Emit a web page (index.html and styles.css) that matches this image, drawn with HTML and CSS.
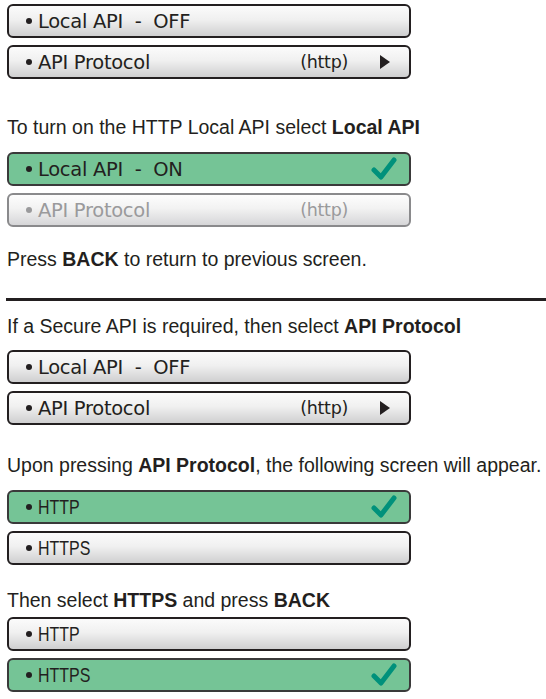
FILE: index.html
```html
<!DOCTYPE html>
<html lang="en">
<head>
    <meta charset="UTF-8">
    <title>Local API Settings</title>
    <link rel="stylesheet" href="styles.css">
</head>
<body>
    <div class="menu first">
        <div class="btn"><span class="dot"></span><span class="label">Local API&nbsp;&nbsp;-&nbsp;&nbsp;OFF</span></div>
        <div class="btn"><span class="dot"></span><span class="label">API Protocol</span><span class="value">(http)</span><span class="arrow"></span></div>
    </div>

    <p class="note n1">To turn on the HTTP Local API select <b>Local API</b></p>

    <div class="menu m2">
        <div class="btn on"><span class="dot"></span><span class="label">Local API&nbsp;&nbsp;-&nbsp;&nbsp;ON</span>
            <svg class="check" viewBox="0 0 28 28"><path d="M5 15 L12 22 L25 5"/></svg>
        </div>
        <div class="btn disabled"><span class="dot"></span><span class="label">API Protocol</span><span class="value">(http)</span><span class="arrow blank"></span></div>
    </div>

    <p class="note n2">Press <b>BACK</b> to return to previous screen.</p>

    <hr class="divider">

    <p class="note n3">If a Secure API is required, then select <b>API Protocol</b></p>

    <div class="menu m3">
        <div class="btn"><span class="dot"></span><span class="label">Local API&nbsp;&nbsp;-&nbsp;&nbsp;OFF</span></div>
        <div class="btn"><span class="dot"></span><span class="label">API Protocol</span><span class="value">(http)</span><span class="arrow"></span></div>
    </div>

    <p class="note n4">Upon pressing <b>API Protocol</b>, the following screen will appear.</p>

    <div class="menu m4">
        <div class="btn on narrow"><span class="dot"></span><span class="label"><span class="squeeze">HTTP</span></span>
            <svg class="check" viewBox="0 0 28 28"><path d="M5 15 L12 22 L25 5"/></svg>
        </div>
        <div class="btn narrow"><span class="dot"></span><span class="label"><span class="squeeze">HTTPS</span></span></div>
    </div>

    <p class="note n5">Then select <b>HTTPS</b> and press <b>BACK</b></p>

    <div class="menu m5">
        <div class="btn narrow"><span class="dot"></span><span class="label"><span class="squeeze">HTTP</span></span></div>
        <div class="btn on narrow"><span class="dot"></span><span class="label"><span class="squeeze">HTTPS</span></span>
            <svg class="check" viewBox="0 0 28 28"><path d="M5 15 L12 22 L25 5"/></svg>
        </div>
    </div>
</body>
</html>
```

FILE: styles.css
```css
body {
    margin: 0;
    padding: 4px 0 0 7px;
    background-color: #ffffff;
    color: #231f20;
    font-family: "Liberation Sans", Arial, sans-serif;
}

.menu {
    width: 404px;
    display: flex;
    flex-direction: column;
    gap: 7px;
}

.m2 { margin-top: 15px; }
.m3 { margin-top: 14px; }
.m4 { margin-top: 15px; }
.m5 { margin-top: 7px; }

.btn {
    height: 34px;
    box-sizing: border-box;
    border: 2px solid #231f20;
    border-radius: 6px;
    background: linear-gradient(#fbfbfb, #f0f0f0 45%, #cfcfd0);
    display: flex;
    align-items: center;
    padding: 0 12px 0 17px;
    font-family: "DejaVu Sans", "Liberation Sans", sans-serif;
    font-size: 19.5px;
    letter-spacing: -0.3px;
    color: #231f20;
}

.btn .dot {
    width: 6px;
    height: 6px;
    border-radius: 50%;
    background-color: #231f20;
    margin-right: 6px;
    flex-shrink: 0;
}

.btn .label {
    flex: 1;
    white-space: nowrap;
}

.btn .value {
    font-size: 17.5px;
    margin-right: 32px;
}

.btn .arrow {
    width: 0;
    height: 0;
    border-top: 7px solid transparent;
    border-bottom: 7px solid transparent;
    border-left: 10px solid #231f20;
    margin-right: 7px;
}

.btn .arrow.blank {
    border-left-color: transparent;
}

.btn.on {
    background: #75c496;
    border-color: #3a3a3a;
}

.btn.disabled {
    border-color: #8a8a8c;
    color: #9a9a9c;
    background: linear-gradient(#fdfdfd, #f2f2f2 45%, #d6d6d8);
}

.btn.disabled .dot {
    background-color: #9a9a9c;
}

.btn.narrow {
    font-family: "Liberation Sans", sans-serif;
    font-size: 21px;
    letter-spacing: 0;
}

.squeeze {
    display: inline-block;
    transform: scaleX(0.76);
    transform-origin: left center;
}

.check {
    width: 28px;
    height: 28px;
}

.check path {
    fill: none;
    stroke: #00917b;
    stroke-width: 5;
    stroke-linecap: round;
    stroke-linejoin: round;
}

.note {
    margin: 0;
    font-size: 19.5px;
    line-height: 20px;
}

.n1 { margin-top: 38px; }
.n2 { margin-top: 22px; }
.n3 { margin-top: 15px; }
.n4 { margin-top: 30px; }
.n5 { margin-top: 25px; }

.divider {
    margin: 29px 0 0 -1px;
    border: none;
    height: 3px;
    background-color: #231f20;
}
```
